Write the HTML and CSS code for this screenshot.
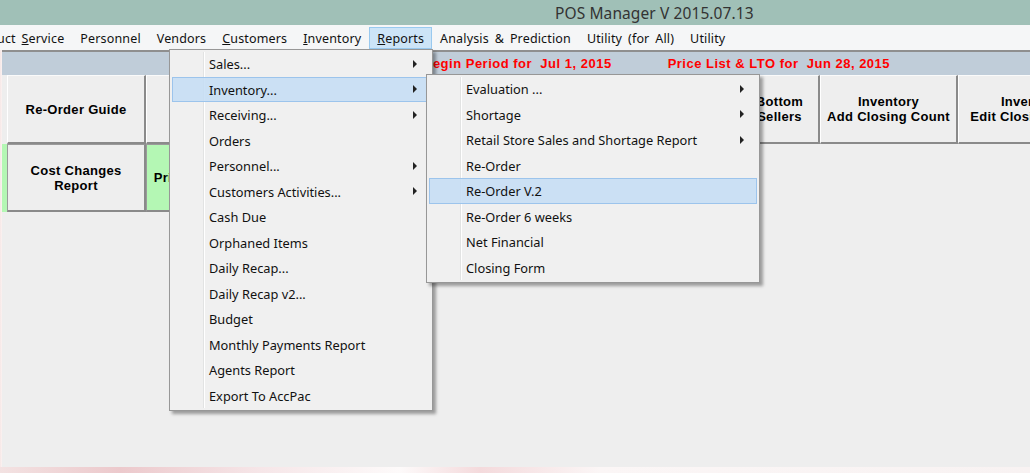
FILE: index.html
```html
<!doctype html>
<html lang="en">
<head>
  <meta charset="utf-8" />
  <title>POS Manager V 2015.07.13</title>
  <link rel="stylesheet" href="styles.css">
</head>
<body>
  <div class="window">
    <div class="titlebar">
      <span class="title">POS Manager V 2015.07.13</span>
    </div>

    <ul class="menubar">
      <li>uct <u>S</u>ervice</li>
      <li>Personnel</li>
      <li>Vendors</li>
      <li><u>C</u>ustomers</li>
      <li><u>I</u>nventory</li>
      <li class="open"><u>R</u>eports</li>
      <li>Analysis &amp; Prediction</li>
      <li>Utility (for All)</li>
      <li>Utility</li>
    </ul>

    <div class="client">
      <div class="infobar">
        <span class="period">Begin Period for&nbsp; Jul 1, 2015</span>
        <span class="price">Price List &amp; LTO for&nbsp; Jun 28, 2015</span>
      </div>

      <div class="btnrow">
        <div class="stub"></div>
        <button class="tile w139">Re-Order Guide</button>
        <button class="tile w139">Sales</button>
        <button class="tile w139">Daily Sales</button>
        <button class="tile w139">Top Sellers</button>
        <button class="tile w177">Slow Movers</button>
        <button class="tile w80">Bottom<br>Sellers</button>
        <button class="tile w138">Inventory<br>Add Closing Count</button>
        <button class="tile w148">Inventory<br>Edit Closing Count</button>
      </div>
      <div class="btnrow">
        <div class="stub green"></div>
        <button class="tile w139">Cost Changes<br>Report</button>
        <button class="tile w139 green">Price List Changes</button>
      </div>
    </div>
  </div>
  <div class="desktop"></div>

  <!-- Reports drop-down -->
  <ul class="menu reports">
    <li class="more">Sales...</li>
    <li class="more hot">Inventory...</li>
    <li class="more">Receiving...</li>
    <li>Orders</li>
    <li class="more">Personnel...</li>
    <li class="more">Customers Activities...</li>
    <li>Cash Due</li>
    <li>Orphaned Items</li>
    <li>Daily Recap...</li>
    <li>Daily Recap v2...</li>
    <li>Budget</li>
    <li>Monthly Payments Report</li>
    <li>Agents Report</li>
    <li>Export To AccPac</li>
  </ul>

  <!-- Inventory sub menu -->
  <ul class="menu inventory">
    <li class="more">Evaluation ...</li>
    <li class="more">Shortage</li>
    <li class="more">Retail Store Sales and Shortage Report</li>
    <li>Re-Order</li>
    <li class="hot">Re-Order V.2</li>
    <li>Re-Order 6 weeks</li>
    <li>Net Financial</li>
    <li>Closing Form</li>
  </ul>
</body>
</html>
```

FILE: styles.css
```css
:root{
  --face:#eeeeee;
  --edge:#8a8a8a;
  --menu:#f0f0f0;
  --hot:rgba(196,221,244,0.85);
  --hot-edge:#9cc4ec;
}

/* ───────────── window ───────────── */
body{
  margin:0;
  width:1030px;
  height:473px;
  overflow:hidden;
  background:linear-gradient(90deg,#f6e7e6 0,#fbf2f1 2px);
  font-family:"Noto Sans","Open Sans",sans-serif;
  color:#111;
  position:relative;
}
.window{
  display:flex;
  flex-direction:column;
  height:467px;
}
.titlebar{
  height:25px;
  background:#a0c0b7;
  display:flex;
  align-items:center;
  padding-left:555px;
}
.title{
  font-size:15.5px;
  color:#333;
  letter-spacing:0.1px;
}

/* ───────────── menu bar ───────────── */
.menubar{
  list-style:none;
  margin:0;
  padding:0;
  height:25px;
  background:#f5f6f7;
  display:flex;
  align-items:center;
  font-size:12.5px;
  letter-spacing:0.15px;
  word-spacing:2.5px;
  overflow:hidden;
}
.menubar li{
  flex:none;
  padding:0 7px;
  height:22px;
  line-height:22px;
  border:1px solid transparent;
  box-sizing:border-box;
}
.menubar li:first-child{ padding-left:0; margin-left:-4px; }
.menubar li.open{
  background:#cce4f7;
  border-color:#99c9ef;
}

/* ───────────── client area ───────────── */
.client{
  flex:1;
  margin-left:2px;
  background:var(--face);
  border-top:2px solid #8f8f8f;
  overflow:hidden;
}
.infobar{
  height:23px;
  background:#c0cdd9;
  display:flex;
  align-items:center;
  padding-left:421px;
  gap:56px;
  font-family:"Liberation Sans",Arial,sans-serif;
  font-weight:bold;
  font-size:13px;
  color:#f00;
  letter-spacing:0.5px;
  white-space:nowrap;
}

.btnrow{
  display:flex;
  height:69px;
}
.btnrow + .btnrow{ height:68px; }
.stub{
  width:5px;
  flex:none;
  background:var(--face);
}
.tile{
  flex:none;
  box-sizing:border-box;
  height:100%;
  margin:0;
  padding:0 2px;
  background:var(--face);
  border-left:1px solid #fff;
  border-top:1px solid #fafafa;
  border-right:2px solid var(--edge);
  border-bottom:2px solid var(--edge);
  font-family:"Liberation Sans",Arial,sans-serif;
  font-weight:bold;
  font-size:13px;
  line-height:15px;
  letter-spacing:0.3px;
  color:#000;
  white-space:nowrap;
  overflow:hidden;
}
.btnrow + .btnrow .tile{
  border-left-color:#9a9a9a;
  border-top-color:#9a9a9a;
}
.green{ background:#b4f7b4; }
.tile.green{ border-left-color:#fff; border-top-color:#fff; }
.w139{ width:139px; }
.w138{ width:138px; }
.w148{ width:148px; }
.w177{ width:177px; }
.w80{ width:80px; }

.desktop{
  height:6px;
  background:linear-gradient(90deg,#f3e2e2 0,#ecc9cc 120px,#f6e6e8 260px,#fdfafa 400px,#f4dadc 480px,#fbf6f6 600px,#f8f2f2 1030px);
}

/* ───────────── drop-down menus ───────────── */
.menu{
  position:absolute;
  list-style:none;
  margin:0;
  padding:1px 2px 2px;
  background:var(--menu);
  border:1px solid #979797;
  box-shadow:3px 3px 3px rgba(0,0,0,0.35);
  font-size:12.8px;
  box-sizing:border-box;
}
.menu:before{
  content:"";
  position:absolute;
  left:33px;
  top:2px;
  bottom:2px;
  width:1px;
  background:#e2e3e3;
  border-right:1px solid #fff;
}
.reports{ left:169px; top:49px; width:264px; }
.inventory{ left:426px; top:74px; width:334px; }

.menu li{
  position:relative;
  height:25.5px;
  line-height:24px;
  padding-left:36px;
  box-sizing:border-box;
  border:1px solid transparent;
  white-space:nowrap;
}
.menu li.hot{
  background:var(--hot);
  border-color:var(--hot-edge);
}
.menu li.more:after{
  content:"";
  position:absolute;
  right:12px;
  top:50%;
  margin-top:-4px;
  border-left:4px solid #222;
  border-top:4px solid transparent;
  border-bottom:4px solid transparent;
}
```
